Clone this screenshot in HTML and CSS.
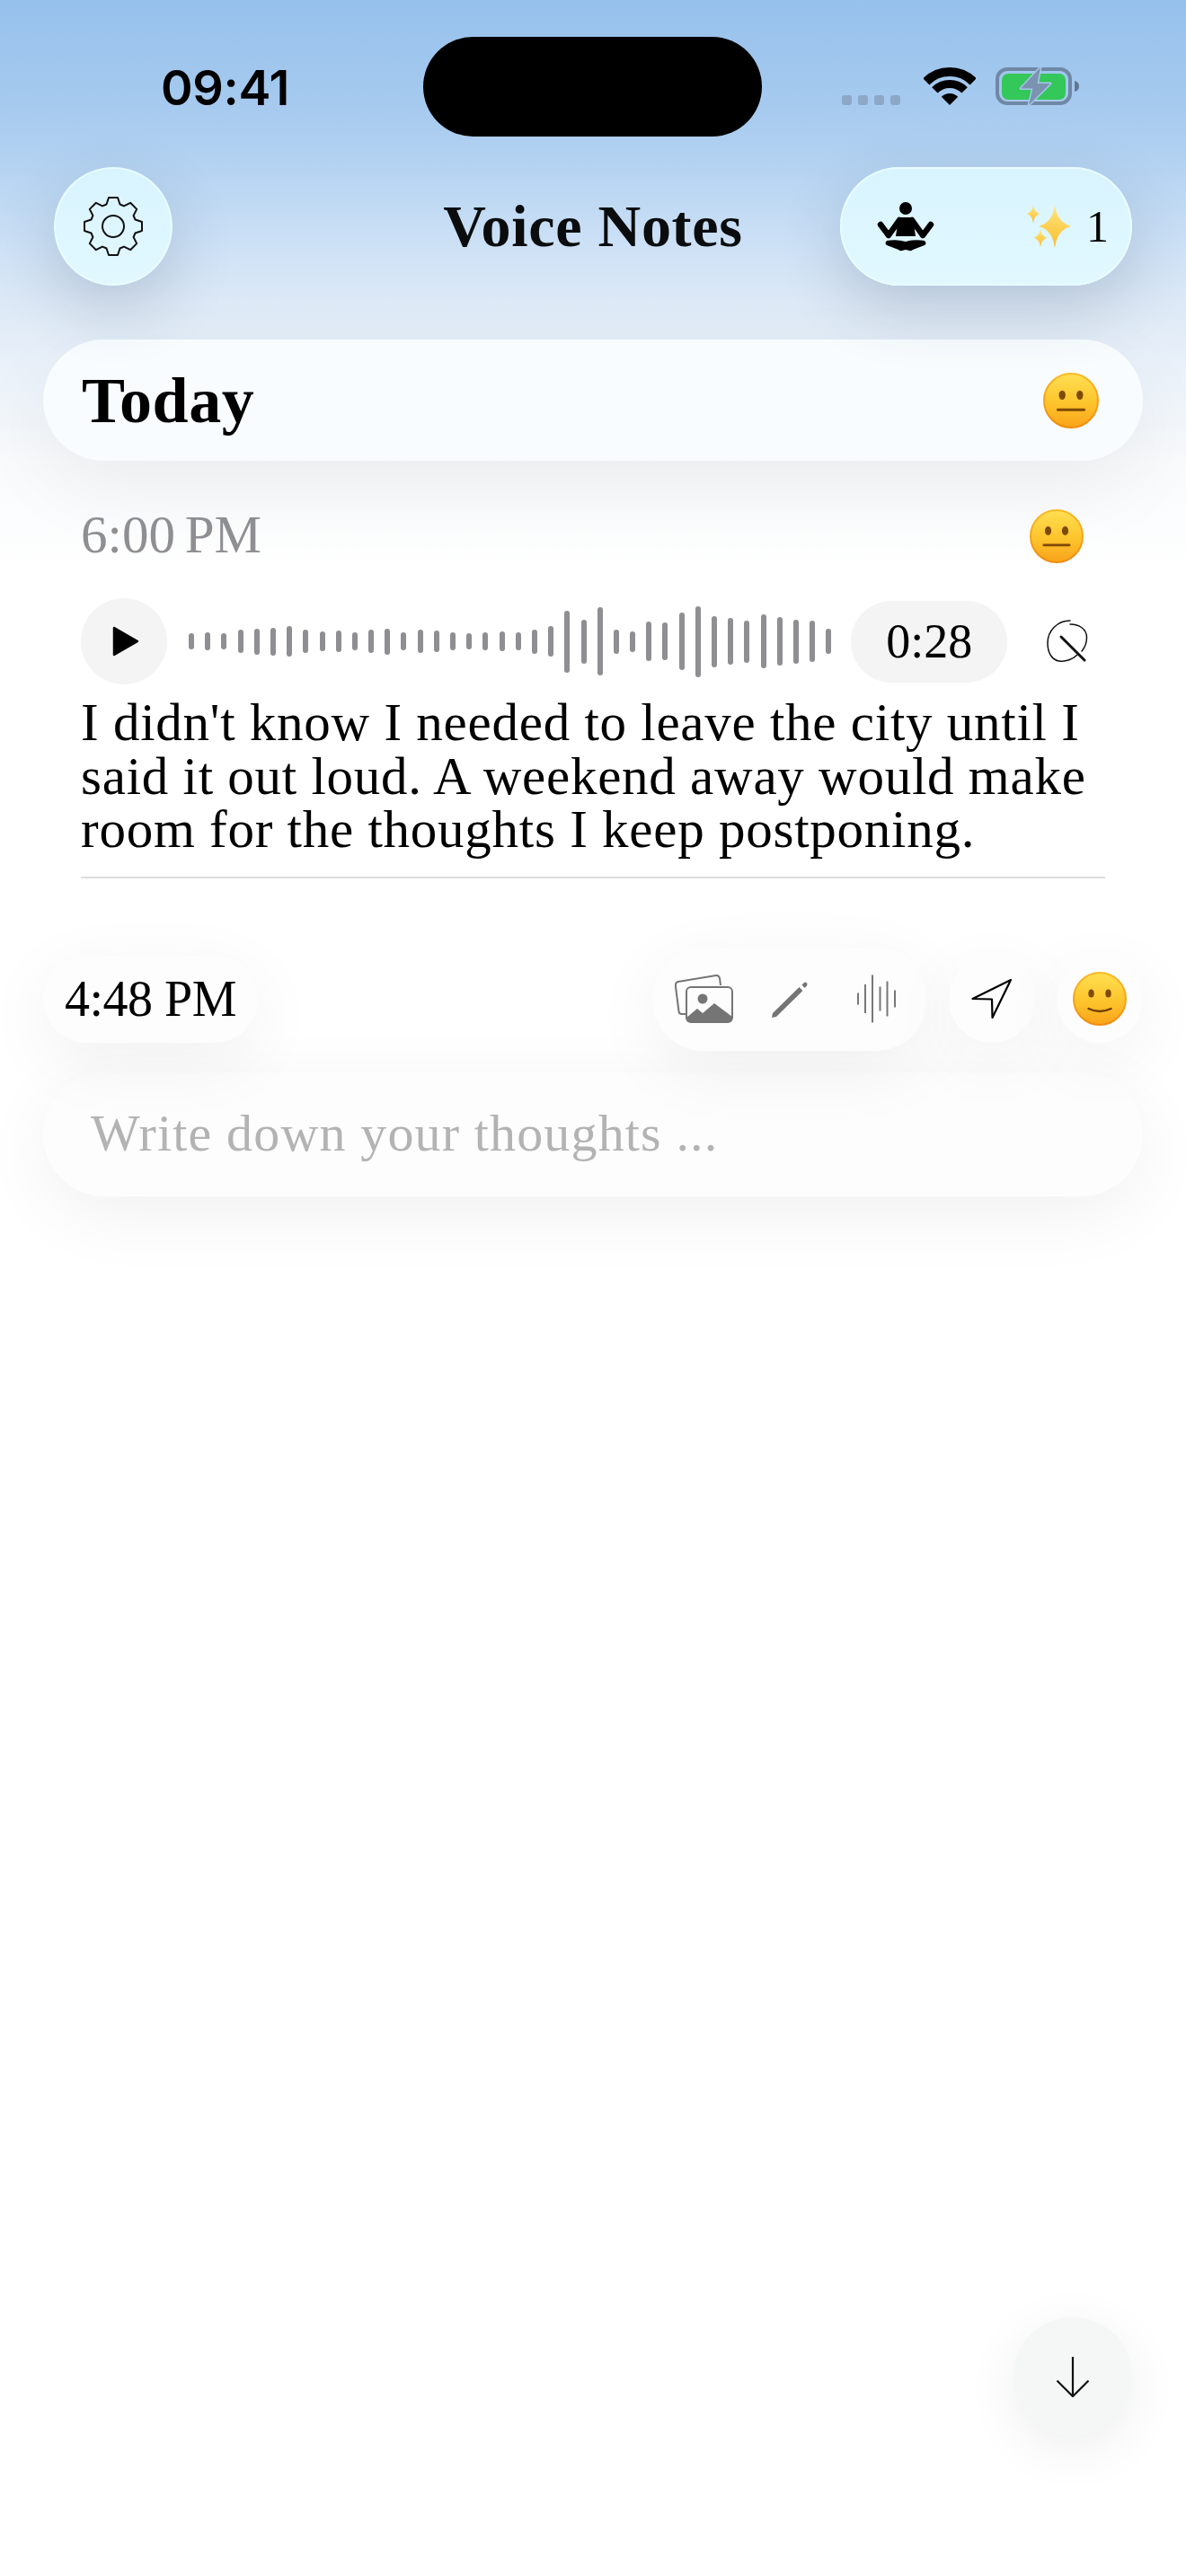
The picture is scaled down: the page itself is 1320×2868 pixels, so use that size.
FILE: index.html
```html
<!DOCTYPE html>
<html lang="en">
<head>
    <meta charset="UTF-8">
    <meta name="viewport" content="width=device-width, initial-scale=1.0">
    <title>Voice Notes</title>
    <link rel="stylesheet" href="styles.css">
</head>
<body>
    <svg class="svg-defs" aria-hidden="true">
        <defs>
            <linearGradient id="faceFill" x1="0" y1="0" x2="0" y2="1">
                <stop offset="0" stop-color="#ffdf52"/>
                <stop offset="0.55" stop-color="#fdc42c"/>
                <stop offset="1" stop-color="#f9a31a"/>
            </linearGradient>
            <linearGradient id="faceEdge" x1="0" y1="0" x2="0" y2="1">
                <stop offset="0" stop-color="#fbb924"/>
                <stop offset="1" stop-color="#ef8c0c"/>
            </linearGradient>
            <linearGradient id="starFill" x1="0" y1="0" x2="0" y2="1">
                <stop offset="0" stop-color="#ffe680"/>
                <stop offset="1" stop-color="#fbbd2c"/>
            </linearGradient>
            <symbol id="faceNeutral" viewBox="0 0 60 60">
                <circle cx="30" cy="30" r="29" fill="url(#faceFill)" stroke="url(#faceEdge)" stroke-width="2"/>
                <ellipse cx="20.5" cy="24" rx="3.6" ry="5" fill="#7d4a05"/>
                <ellipse cx="39.5" cy="24" rx="3.6" ry="5" fill="#7d4a05"/>
                <rect x="14.5" y="38.500" width="31" height="2.800" rx="1.400" fill="#7d4a05"/>
            </symbol>
            <symbol id="faceSmile" viewBox="0 0 60 60">
                <circle cx="30" cy="30" r="29" fill="url(#faceFill)" stroke="url(#faceEdge)" stroke-width="2"/>
                <ellipse cx="20.500" cy="24" rx="3.200" ry="4.600" fill="#7d4a05"/>
                <ellipse cx="39.500" cy="24" rx="3.200" ry="4.600" fill="#7d4a05"/>
                <path d="M17.500 41 Q30 47 42.500 41" fill="none" stroke="#6e3f04" stroke-width="2.400" stroke-linecap="round"/>
            </symbol>
        </defs>
    </svg>

    <div class="status-bar">
        <div class="clock">09:41</div>
        <div class="island"></div>
        <div class="status-icons">
            <div class="signal"><span></span><span></span><span></span><span></span></div>
            <svg class="wifi" width="58" height="42" viewBox="0 0 58 42">
                <path d="M2.840 15.840 A37 37 0 0 1 55.160 15.840" fill="none" stroke="#000" stroke-width="10"/>
                <path d="M12.380 25.380 A23.500 23.500 0 0 1 45.620 25.380" fill="none" stroke="#000" stroke-width="9"/>
                <path d="M29 42 L19.800 32.800 A13 13 0 0 1 38.200 32.800 Z" fill="#000"/>
            </svg>
            <svg class="battery" width="93" height="46" viewBox="0 -2 93 46">
                <rect x="2" y="2" width="81" height="38" rx="11" fill="none" stroke="#6f88a6" stroke-width="4"/>
                <rect x="7" y="7" width="71" height="29" rx="7" fill="#34c759"/>
                <path d="M88 15 Q93 16 93 21 Q93 26 88 27 Z" fill="#5f7896"/>
                <path d="M50 0 L28 23.500 L41.500 23.500 L37 42 L61 18 L46.500 18 Z" fill="#7b93b0" stroke="#a4c7ec" stroke-width="3" stroke-linejoin="round" paint-order="stroke"/>
            </svg>
        </div>
    </div>

    <header class="top-bar">
        <button class="round-btn gear-btn">
            <svg width="70" height="70" viewBox="-35 -35 70 70">
                <path d="M-7.500 -24.500 L-5 -32 L5 -32 L7.500 -24.500 L12 -22.600 L19.100 -26.200 L26.200 -19.100 L22.600 -12 L24.500 -7.500 L32 -5 L32 5 L24.500 7.500 L22.600 12 L26.200 19.100 L19.100 26.200 L12 22.600 L7.500 24.500 L5 32 L-5 32 L-7.500 24.500 L-12 22.600 L-19.100 26.200 L-26.200 19.100 L-22.600 12 L-24.500 7.500 L-32 5 L-32 -5 L-24.500 -7.500 L-22.600 -12 L-26.200 -19.100 L-19.100 -26.200 L-12 -22.600 Z" fill="none" stroke="#111" stroke-width="2" stroke-linejoin="round"/>
                <circle cx="0" cy="0" r="12" fill="none" stroke="#111" stroke-width="2"/>
            </svg>
        </button>
        <h1 class="app-title">Voice Notes</h1>
        <div class="streak-pill">
            <svg class="meditate" width="64" height="55" viewBox="0 0 64 55">
                <circle cx="32" cy="7" r="7" fill="#000"/>
                <path d="M24 17 H40 L43 38 H21 Z" fill="#000"/>
                <path d="M25 20 L13 37 L4 25 M39 20 L51 37 L60 25" fill="none" stroke="#000" stroke-width="6.500" stroke-linecap="round" stroke-linejoin="round"/>
                <path d="M11 43 Q22 41 32 44 Q42 41 53 43 Q56 46 53 48 L40 53 Q38 55 36 54 L32 53 L28 54 Q26 55 24 53 L11 48 Q8 46 11 43 Z" fill="#000"/>
            </svg>
            <div class="streak-count">
                <svg width="50" height="48" viewBox="0 0 50 48">
                    <path d="M31 0 Q33 19 49 24 Q33 28 31 48 Q29 28 13 24 Q29 19 31 0 Z" fill="url(#starFill)"/>
                    <path d="M7 0 Q8 8 14 10 Q8 12 7 21 Q6 12 0 10 Q6 8 7 0 Z" fill="url(#starFill)"/>
                    <path d="M15 27 Q16 34 22 37 Q16 39 15 47 Q14 39 8 37 Q14 34 15 27 Z" fill="url(#starFill)"/>
                </svg>
                <span>1</span>
            </div>
        </div>
    </header>

    <main>
        <section class="day-bar">
            <h2>Today</h2>
            <svg width="62" height="62"><use href="#faceNeutral"/></svg>
        </section>

        <article class="entry">
            <div class="entry-head">
                <span class="entry-time">6:00 PM</span>
                <svg width="60" height="60"><use href="#faceNeutral"/></svg>
            </div>
            <div class="player">
                <button class="play-btn">
                    <svg width="30" height="34" viewBox="0 0 30 34"><path d="M2 2 L28 17 L2 32 Z" fill="#000" stroke="#000" stroke-width="2.500" stroke-linejoin="round"/></svg>
                </button>
                <div class="waveform">
                    <span style="height:18px"></span><span style="height:20px"></span><span style="height:18px"></span><span style="height:26px"></span><span style="height:29px"></span><span style="height:31px"></span><span style="height:34px"></span><span style="height:26px"></span><span style="height:22px"></span><span style="height:24px"></span>
                    <span style="height:20px"></span><span style="height:26px"></span><span style="height:29px"></span><span style="height:20px"></span><span style="height:26px"></span><span style="height:24px"></span><span style="height:20px"></span><span style="height:18px"></span><span style="height:20px"></span><span style="height:22px"></span>
                    <span style="height:20px"></span><span style="height:27px"></span><span style="height:34px"></span><span style="height:69px"></span><span style="height:49px"></span><span style="height:76px"></span><span style="height:27px"></span><span style="height:23px"></span><span style="height:44px"></span><span style="height:42px"></span>
                    <span style="height:64px"></span><span style="height:79px"></span><span style="height:57px"></span><span style="height:52px"></span><span style="height:47px"></span><span style="height:60px"></span><span style="height:54px"></span><span style="height:49px"></span><span style="height:46px"></span><span style="height:28px"></span>
                </div>
                <div class="duration">0:28</div>
                <svg class="wand" width="46" height="48" viewBox="0 0 46 48">
                    <path d="M26 1 C12 1 1 12 1 26 C1 37 6 45 14 46 C21 47 29 44 34 39" fill="none" stroke="#111" stroke-width="1.500" stroke-linecap="round"/>
                    <path d="M26 5 C36 5 44.500 10 44.500 20 C44.500 26 43 30 39 35" fill="none" stroke="#111" stroke-width="1.500" stroke-linecap="round"/>
                    <path d="M16 19 L42 45" fill="none" stroke="#111" stroke-width="3" stroke-linecap="round"/>
                </svg>
            </div>
            <p class="transcript">I didn't know I needed to leave the city until I said it out loud. A weekend away would make room for the thoughts I keep postponing.</p>
        </article>

        <section class="compose">
            <div class="compose-row">
                <div class="time-chip">4:48 PM</div>
                <div class="compose-tools">
                    <div class="tool-group">
                        <svg width="66" height="54" viewBox="0 0 66 54">
                            <path d="M12 44 H8 Q5 44 4.500 41 L0.800 12 Q0.500 9 3.500 8 L46 1 Q49 0.800 50 4 L51 12" fill="none" stroke="#757575" stroke-width="2"/>
                            <rect x="13" y="14" width="51" height="39" rx="5" fill="none" stroke="#757575" stroke-width="2"/>
                            <circle cx="31" cy="27" r="5.500" fill="#757575"/>
                            <path d="M13 48 L25 38 L31 43 L44 32 L64 47 V49 Q64 53 60 53 H17 Q13 53 13 49 Z" fill="#757575"/>
                        </svg>
                        <svg class="pencil" width="44" height="44" viewBox="0 0 44 44">
                            <path d="M1 43 L2 38 L31.500 9 L35.500 13 L6 42 Z" fill="#757575"/>
                            <path d="M34.500 6.500 L37 4 Q38.500 3 40 4.500 Q41 6 40 7.500 L37.500 10 Z" fill="#757575"/>
                        </svg>
                        <svg class="wave-icon" width="44" height="54" viewBox="0 0 44 54">
                            <path d="M1 20.500 V33.500 M9 11 V43 M17 0.500 V53.500 M25.500 13.500 V40.500 M33.500 7.500 V46.500 M42 17.500 V36.500" fill="none" stroke="#777" stroke-width="2"/>
                        </svg>
                    </div>
                    <button class="tool-circle">
                        <svg width="46" height="46" viewBox="0 0 46 46"><path d="M44 2 L1.500 23 L23 23.500 L23.500 44 Z" fill="none" stroke="#000" stroke-width="2.200" stroke-linejoin="round"/></svg>
                    </button>
                    <button class="tool-circle">
                        <svg width="60" height="60"><use href="#faceSmile"/></svg>
                    </button>
                </div>
            </div>
            <div class="thought-input">Write down your thoughts ...</div>
        </section>
    </main>

    <button class="scroll-btn">
        <svg width="38" height="46" viewBox="0 0 38 46"><path d="M19 1 V44 M1.500 27.500 L19 45 L36.500 27.500" fill="none" stroke="#111" stroke-width="2.200"/></svg>
    </button>
</body>
</html>
```

FILE: styles.css
```css
* {
    margin: 0;
    padding: 0;
    box-sizing: border-box;
}

body {
    position: relative;
    height: 2868px;
    overflow: hidden;
    background-color: #fff;
    background-image: linear-gradient(to bottom, #96c1ec 0, #a8cbef 130px, #b8d5f2 200px, #cfe2f6 280px, #dde9f6 340px, #e8f0f9 400px, #f8fafc 510px, #fff 640px);
    background-repeat: no-repeat;
    font-family: 'Liberation Serif', serif;
    color: #000;
}

button {
    border: none;
    font: inherit;
    color: inherit;
}

svg {
    display: block;
}

.svg-defs {
    position: absolute;
    width: 0;
    height: 0;
}

/* status bar */
.status-bar {
    display: grid;
    grid-template-columns: 471px 377px 1fr;
    height: 186px;
    padding-top: 41px;
}

.clock {
    padding: 27px 0 0 179px;
    font-family: 'Inter', sans-serif;
    font-size: 54px;
    line-height: 60px;
    font-weight: 600;
    letter-spacing: -0.3px;
}

.island {
    height: 111px;
    border-radius: 56px;
    background-color: #000;
}

.status-icons {
    display: flex;
    align-items: flex-end;
    height: 76px;
    padding-left: 89px;
}

.signal {
    display: flex;
    gap: 7px;
    margin-right: 26px;
}

.signal span {
    width: 11px;
    height: 11px;
    border-radius: 3px;
    background-color: #8ca8c6;
}

.battery {
    margin: 0 0 -2px 22px;
}

/* top bar */
.top-bar {
    display: grid;
    grid-template-columns: 1fr auto 1fr;
    align-items: center;
    height: 132px;
    padding: 0 60px;
}

.round-btn {
    display: flex;
    align-items: center;
    justify-content: center;
    width: 132px;
    height: 132px;
    border-radius: 50%;
}

.gear-btn,
.streak-pill {
    background-image: linear-gradient(to bottom, #d8f4ff, #e2f8ff);
    box-shadow: inset 0 0 0 2px rgba(235, 252, 255, 0.8), 0 24px 70px rgba(40, 60, 90, 0.2);
}

.app-title {
    font-size: 66px;
    line-height: 76px;
    font-weight: bold;
    letter-spacing: 0.7px;
    color: #0a0c0e;
}

.streak-pill {
    justify-self: end;
    display: flex;
    align-items: center;
    justify-content: space-between;
    width: 325px;
    height: 132px;
    padding: 0 26px 0 41px;
    border-radius: 66px;
}

.streak-count {
    display: flex;
    align-items: center;
    gap: 16px;
    font-size: 50px;
    line-height: 56px;
}

/* day header */
.day-bar {
    display: flex;
    align-items: center;
    justify-content: space-between;
    height: 135px;
    margin: 60px 48px 0;
    padding: 0 49px 0 43px;
    border-radius: 68px;
    background-color: #f8fcff;
    box-shadow: 0 30px 90px rgba(0, 0, 0, 0.06);
}

.day-bar h2 {
    font-size: 72px;
    line-height: 80px;
    font-weight: bold;
    letter-spacing: 0.6px;
}

/* entry */
.entry {
    margin: 54px 90px 0;
    border-bottom: 2px solid #dcdcdc;
    padding-bottom: 22px;
}

.entry-head {
    display: flex;
    align-items: center;
    justify-content: space-between;
    height: 60px;
    padding-right: 24px;
}

.entry-time {
    margin-top: -4px;
    font-size: 59px;
    word-spacing: -4px;
    color: #8e8e93;
}

.player {
    display: flex;
    align-items: center;
    height: 96px;
    margin-top: 39px;
}

.play-btn {
    display: flex;
    align-items: center;
    justify-content: center;
    flex: none;
    width: 96px;
    height: 96px;
    padding-left: 4px;
    border-radius: 50%;
    background-color: #f4f4f5;
}

.waveform {
    display: flex;
    align-items: center;
    gap: 12.2px;
    margin-left: 24px;
}

.waveform span {
    flex: none;
    width: 6px;
    border-radius: 3px;
    background-color: #8e8e93;
}

.duration {
    flex: none;
    width: 174px;
    height: 91px;
    margin-left: 22px;
    border-radius: 46px;
    background-color: #f4f4f5;
    font-size: 54px;
    line-height: 91px;
    text-align: center;
}

.wand {
    margin-left: 44px;
}

.transcript {
    margin-top: 13px;
    font-size: 59px;
    line-height: 59.5px;
    letter-spacing: 0.75px;
}

/* compose area */
.compose {
    margin: 77px 48px 0;
}

.compose-row {
    display: flex;
    align-items: center;
    justify-content: space-between;
}

.time-chip {
    width: 239px;
    height: 97px;
    border-radius: 49px;
    background-color: #fdfdfd;
    box-shadow: 0 20px 80px rgba(0, 0, 0, 0.06);
    font-size: 56px;
    line-height: 97px;
    letter-spacing: -0.5px;
    text-align: center;
}

.compose-tools {
    display: flex;
    align-items: center;
    gap: 24px;
}

.tool-group {
    display: flex;
    align-items: center;
    width: 306px;
    height: 115px;
    padding-left: 25px;
    border-radius: 58px;
    background-color: #fdfdfd;
    box-shadow: 0 20px 80px rgba(0, 0, 0, 0.06);
}

.pencil {
    margin-left: 41px;
}

.wave-icon {
    margin-left: 52px;
}

.tool-circle {
    display: flex;
    align-items: center;
    justify-content: center;
    width: 96px;
    height: 97px;
    border-radius: 50%;
    background-color: #fdfdfd;
    box-shadow: 0 20px 80px rgba(0, 0, 0, 0.06);
}

.thought-input {
    height: 138px;
    margin-top: 24px;
    padding-left: 53px;
    border-radius: 69px;
    background-color: #fdfdfd;
    box-shadow: 0 20px 80px rgba(0, 0, 0, 0.06);
    font-size: 58px;
    line-height: 136px;
    letter-spacing: 1.15px;
    color: #b3b3b3;
}

/* scroll to bottom */
.scroll-btn {
    position: absolute;
    top: 2580px;
    left: 1128px;
    display: flex;
    align-items: center;
    justify-content: center;
    width: 132px;
    height: 132px;
    border-radius: 50%;
    background-color: #f5f6f6;
    box-shadow: 0 14px 60px rgba(0, 0, 0, 0.07);
}
```
